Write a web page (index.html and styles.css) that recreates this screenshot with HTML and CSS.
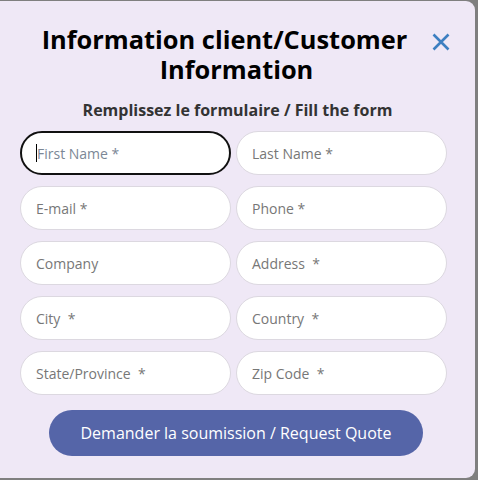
FILE: index.html
```html
<!DOCTYPE html>
<html>
<head>
<meta charset="utf-8">
<link rel="stylesheet" href="styles.css">
</head>
<body>
<div class="modal">
  <button class="close" aria-label="close">
    <svg width="18" height="18" viewBox="0 0 18 18"><path d="M1.5 1.5 L16.5 16.5 M16.5 1.5 L1.5 16.5" stroke="#3d7fc1" stroke-width="2.6" stroke-linecap="butt" fill="none"/></svg>
  </button>
  <h1 class="title"><span class="l1">Information client/Customer</span><span class="l2">Information</span></h1>
  <p class="subtitle">Remplissez le formulaire / Fill the form</p>
  <form class="grid">
    <div class="field focus"><span class="caret"></span>First Name *</div>
    <div class="field">Last Name *</div>
    <div class="field">E-mail *</div>
    <div class="field">Phone *</div>
    <div class="field">Company</div>
    <div class="field">Address&nbsp; *</div>
    <div class="field">City&nbsp; *</div>
    <div class="field">Country&nbsp; *</div>
    <div class="field">State/Province&nbsp; *</div>
    <div class="field">Zip Code&nbsp; *</div>
  </form>
  <div class="actions"><button class="submit">Demander la soumission / Request Quote</button></div>
</div>
</body>
</html>
```
FILE: styles.css
```css
html, body {
  margin: 0;
  padding: 0;
  width: 478px;
  height: 480px;
  background: #7f7f7f;
  overflow: hidden;
}
.modal {
  position: relative;
  box-sizing: border-box;
  width: 475px;
  height: 477px;
  margin-top: 1px;
  background: #efe8f6;
  border-radius: 0 9px 9px 0;
  padding-top: 23px;
  font-family: "Open Sans", "Noto Sans", sans-serif;
}
.close {
  position: absolute;
  top: 32px;
  left: 432px;
  width: 18px;
  height: 18px;
  padding: 0;
  border: 0;
  background: none;
}
.close svg { display: block; }
.title {
  margin: 0;
  font-size: 25.4px;
  line-height: 30px;
  font-weight: 700;
  color: #000;
  text-align: center;
}
.title span { display: block; }
.title .l1 { padding-right: 26px; }
.title .l2 { padding-right: 2px; }
.subtitle {
  margin: 16px 0 0;
  font-size: 16px;
  line-height: 20px;
  font-weight: 700;
  color: #333;
  text-align: center;
}
.grid {
  margin: 11px 0 0 20px;
  width: 427px;
  display: grid;
  grid-template-columns: 211px 211px;
  column-gap: 5px;
  row-gap: 11px;
}
.field {
  box-sizing: border-box;
  height: 44px;
  border: 1px solid #dcd8e0;
  border-radius: 22px;
  background: #fff;
  padding-left: 15px;
  display: flex;
  align-items: center;
  font-size: 14px;
  color: #777;
}
.field.focus {
  border: 2px solid #111;
  padding-left: 14px;
  color: #7b8796;
}
.caret {
  display: inline-block;
  width: 1px;
  height: 18px;
  background: #000;
  margin-right: 0;
}
.actions {
  display: flex;
  margin-top: 15px;
  padding-left: 49px;
}
.submit {
  width: 374px;
  height: 46px;
  border: 0;
  border-radius: 23px;
  background: #5565a8;
  color: #fff;
  font-family: "Open Sans", "Noto Sans", sans-serif;
  font-size: 16px;
  padding: 0;
}
```
